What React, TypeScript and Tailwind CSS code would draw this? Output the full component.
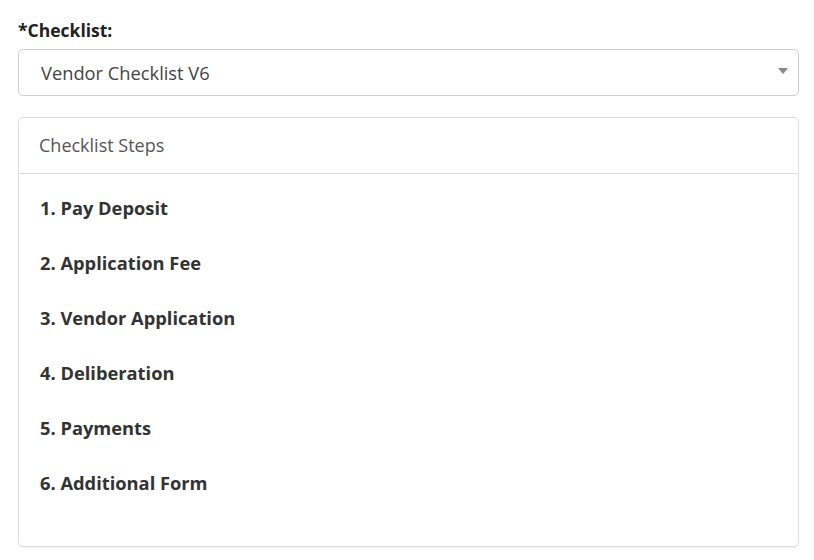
import React from "react";

const steps = [
  "1. Pay Deposit",
  "2. Application Fee",
  "3. Vendor Application",
  "4. Deliberation",
  "5. Payments",
  "6. Additional Form",
];

export default function App() {
  return (
    <div
      className="w-[814px] h-[560px] bg-white text-[#333] pl-[18px] pr-[15px] pt-[18px]"
      style={{ fontFamily: '"Open Sans", "Noto Sans", sans-serif' }}
    >
      <label className="block text-[17.5px] font-bold text-[#222] leading-[24px]">*Checklist:</label>
      <div className="mt-[7px] h-[47px] border border-[#cfcfcf] rounded-[5px] flex items-center justify-between pl-[22px] pr-[10px]">
        <span className="text-[18.3px] text-[#444]">Vendor Checklist V6</span>
        <svg width="10" height="6" viewBox="0 0 10 6" className="-mt-[4px]">
          <path d="M0 0h10L5 6z" fill="#888" />
        </svg>
      </div>

      <div className="mt-[21px] h-[430px] border border-[#dddddd] rounded-[5px] shadow-[0_1px_1px_rgba(0,0,0,0.06)]">
        <div className="h-[56px] border-b border-[#dddddd] flex items-center px-[20px] text-[18px] text-[#555]">
          Checklist Steps
        </div>
        <div className="px-[21px] pt-[22px] flex flex-col gap-[31px]">
          {steps.map((s) => (
            <div key={s} className="text-[18.3px] font-bold text-[#333] leading-[24px]">
              {s}
            </div>
          ))}
        </div>
      </div>
    </div>
  );
}
